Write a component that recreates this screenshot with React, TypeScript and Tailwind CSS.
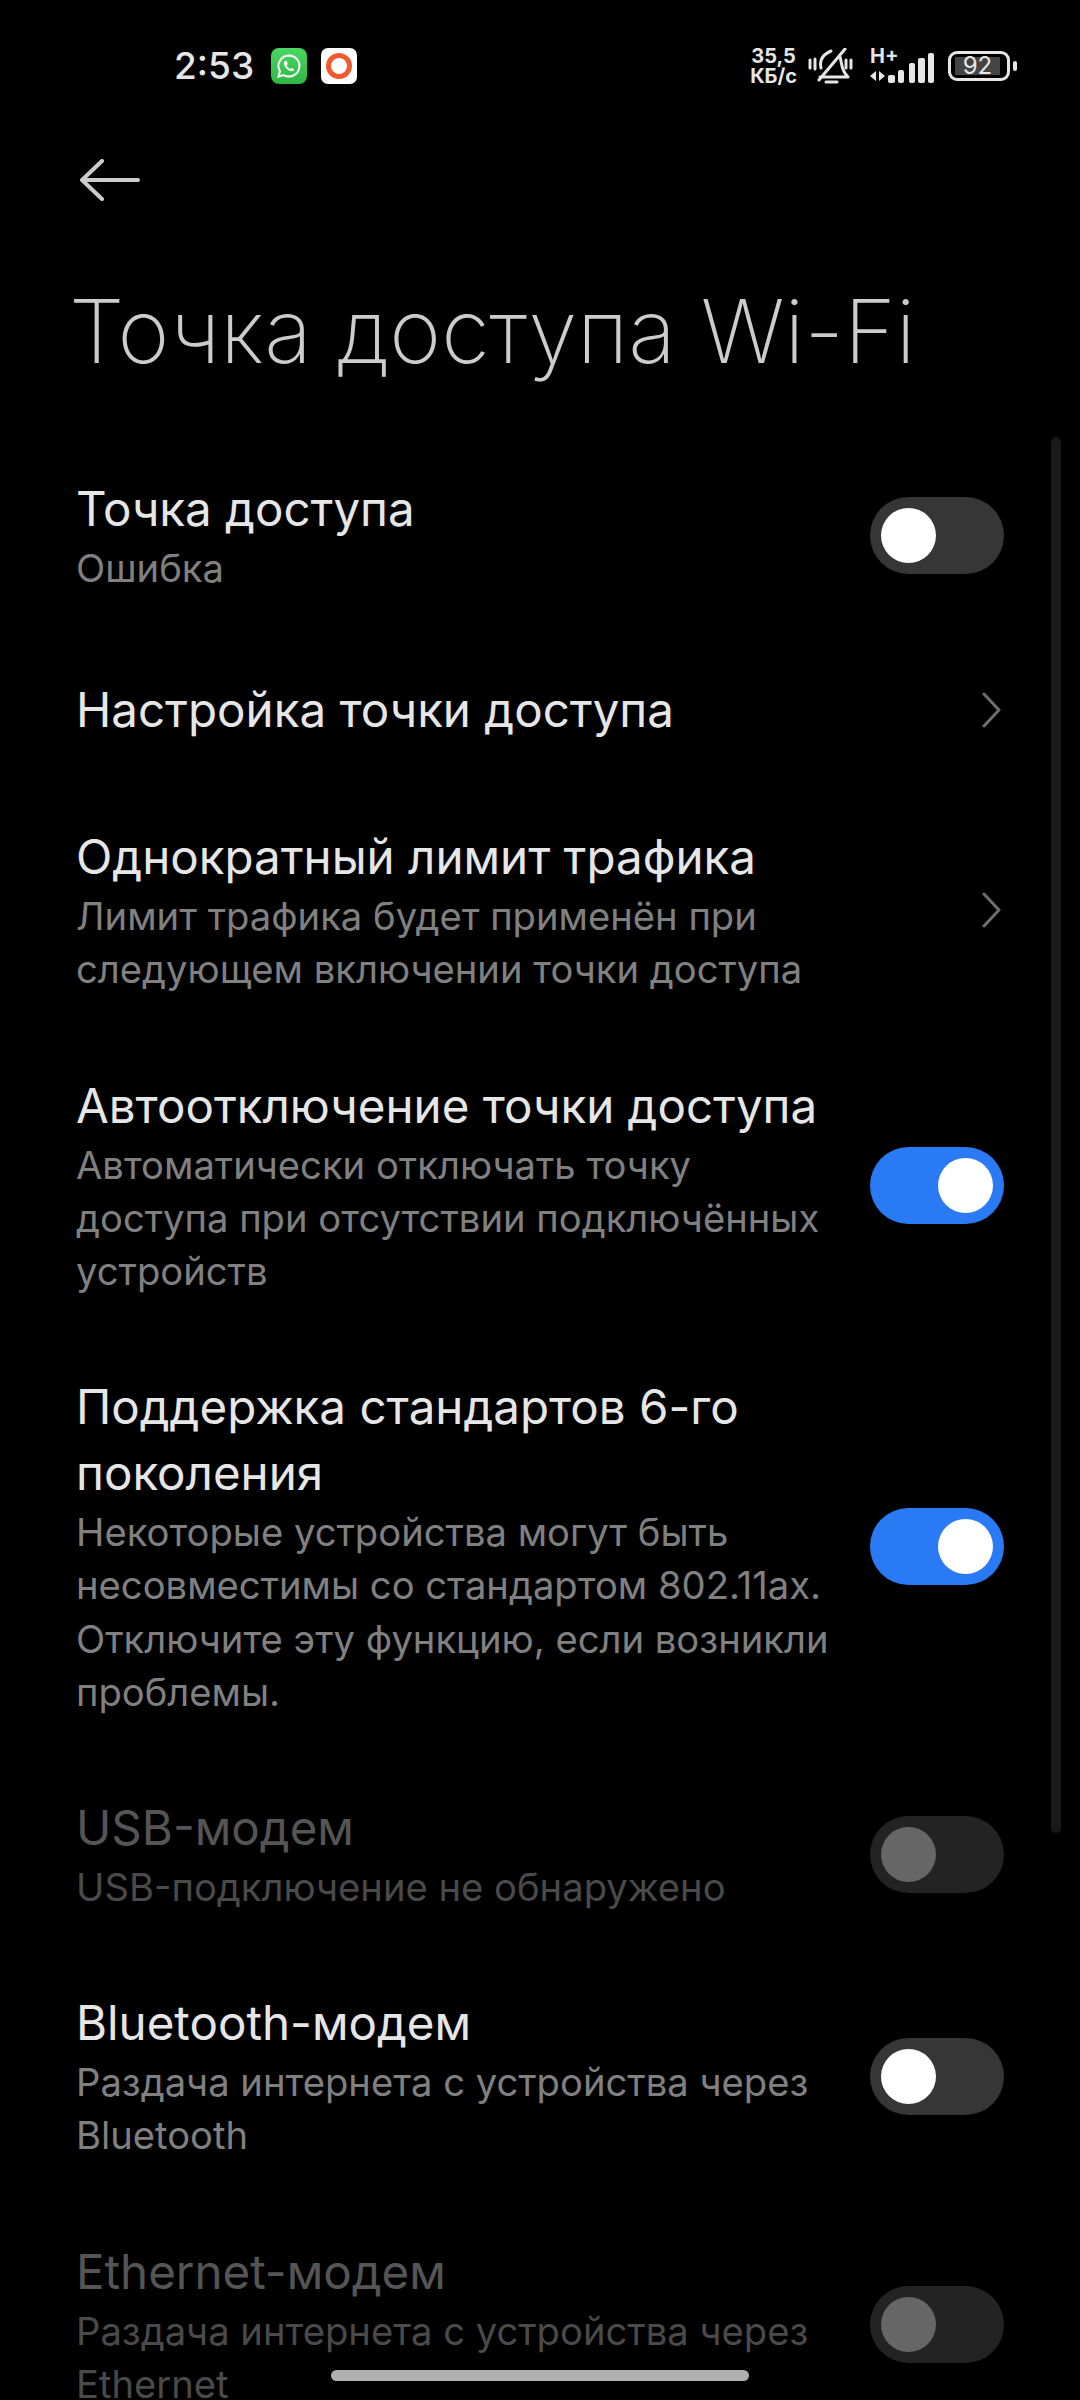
const font = "font-['Inter',sans-serif]";

type Row = {
  title: string[];
  sub?: string[];
  control: "on" | "off" | "chevron" | "disabled";
  dim?: boolean;
  tall?: boolean;
};

const rows: Row[] = [
  { title: ["Точка доступа"], sub: ["Ошибка"], control: "off" },
  { title: ["Настройка точки доступа"], control: "chevron", tall: true },
  {
    title: ["Однократный лимит трафика"],
    sub: ["Лимит трафика будет применён при", "следующем включении точки доступа"],
    control: "chevron",
  },
  {
    title: ["Автоотключение точки доступа"],
    sub: ["Автоматически отключать точку", "доступа при отсутствии подключённых", "устройств"],
    control: "on",
  },
  {
    title: ["Поддержка стандартов 6-го", "поколения"],
    sub: [
      "Некоторые устройства могут быть",
      "несовместимы со стандартом 802.11ax.",
      "Отключите эту функцию, если возникли",
      "проблемы.",
    ],
    control: "on",
  },
  { title: ["USB-модем"], sub: ["USB-подключение не обнаружено"], control: "disabled", dim: true },
  {
    title: ["Bluetooth-модем"],
    sub: ["Раздача интернета с устройства через", "Bluetooth"],
    control: "off",
  },
  {
    title: ["Ethernet-модем"],
    sub: ["Раздача интернета с устройства через", "Ethernet"],
    control: "disabled",
    dim: true,
  },
];

function Toggle({ state }: { state: "on" | "off" | "disabled" }) {
  if (state === "on") {
    return (
      <div className="flex h-[77px] w-[134px] shrink-0 items-center justify-end rounded-full bg-[#2a7af6] px-[11px]">
        <div className="size-[55px] rounded-full bg-white" />
      </div>
    );
  }
  return (
    <div
      className={`flex h-[77px] w-[134px] shrink-0 items-center rounded-full px-[11px] ${
        state === "off" ? "bg-[#363636]" : "bg-[#232323]"
      }`}
    >
      <div className={`size-[55px] rounded-full ${state === "off" ? "bg-white" : "bg-[#666666]"}`} />
    </div>
  );
}

function SettingRow({ row }: { row: Row }) {
  return (
    <div className={`flex items-center justify-between py-[38px] ${row.tall ? "min-h-[153px]" : ""}`}>
      <div className="min-w-0">
        {row.title.map((line) => (
          <div
            key={line}
            className={`whitespace-nowrap text-[47.5px] leading-[66px] ${row.dim ? "text-[#555555]" : "text-[#e6e6e6]"}`}
          >
            {line}
          </div>
        ))}
        {row.sub?.map((line) => (
          <div
            key={line}
            className={`whitespace-nowrap text-[38.2px] leading-[53.2px] ${row.dim ? "text-[#4a4a4a]" : "text-[#808080]"}`}
          >
            {line}
          </div>
        ))}
      </div>
      {row.control === "chevron" ? (
        <svg
          viewBox="0 0 19 36"
          className="mr-[3px] h-[36px] w-[19px] shrink-0"
          fill="none"
          stroke="#6e6e6e"
          strokeWidth="3"
          strokeLinecap="round"
          strokeLinejoin="round"
        >
          <path d="M2 2l15 16L2 34" />
        </svg>
      ) : (
        <Toggle state={row.control} />
      )}
    </div>
  );
}

function StatusBar() {
  return (
    <div className="flex h-[100px] items-center justify-between pl-[174px] pr-[63px] pt-[32px]">
      <div className="flex items-center">
        <span className="text-[37px] font-medium text-[#e6e6e6]">2:53</span>
        <svg viewBox="0 0 36 36" className="ml-[17px] size-[36px]">
          <defs>
            <linearGradient id="wa" x1="0" y1="0" x2="0" y2="1">
              <stop offset="0" stopColor="#49d862" />
              <stop offset="1" stopColor="#2cb742" />
            </linearGradient>
          </defs>
          <rect width="36" height="36" rx="8" fill="url(#wa)" />
          <path
            d="M18 7.5a10.5 10.5 0 0 0-9 15.9L7.5 28.5l5.2-1.4A10.5 10.5 0 1 0 18 7.5Z"
            fill="none"
            stroke="#fff"
            strokeWidth="2"
          />
          <path
            d="M14.5 12.8c-.6 0-1.6.9-1.6 2.6 0 3.2 4.4 7.8 7.8 7.8 1.7 0 2.6-1.2 2.5-2l-2.7-1.5-1.2 1.2c-1.5-.5-3.2-2.2-3.7-3.7l1.2-1.2-1.3-3.2Z"
            fill="#fff"
          />
        </svg>
        <svg viewBox="0 0 36 36" className="ml-[14px] size-[36px]">
          <rect width="36" height="36" rx="7" fill="#ffffff" />
          <circle cx="18" cy="18" r="10.5" fill="none" stroke="#f4582c" strokeWidth="5" />
        </svg>
      </div>
      <div className="flex items-center">
        <div className="text-center text-[20px] font-bold leading-[20px] text-[#e6e6e6]">
          35,5
          <br />
          КБ/с
        </div>
        <svg
          viewBox="0 0 45 36"
          className="ml-[11px] h-[36px] w-[45px]"
          fill="none"
          stroke="#e6e6e6"
          strokeWidth="3"
          strokeLinecap="round"
          strokeLinejoin="round"
        >
          <path d="M13 20c-1-3-2-12 10-17" />
          <path d="M32 9c2 6 1 14 8 20H12" />
          <path d="M37 1 11 32" />
          <path d="M18 34h11" />
          <path d="M2 12v8M7 11v10M38 12v8M43 12v8" />
        </svg>
        <div className="relative ml-[15px] h-[34px] w-[66px]">
          <span className="absolute left-[2px] top-[-3px] text-[20px] font-bold leading-[20px] text-[#e6e6e6]">H+</span>
          <svg viewBox="0 0 66 34" className="h-[34px] w-[66px]" fill="#e6e6e6">
            <path d="M8 22v10l-6-5ZM11 22l6 5-6 5Z" />
            <rect x="20" y="26" width="7" height="8" rx="2" />
            <rect x="30" y="21" width="6" height="13" rx="2" />
            <rect x="41" y="14" width="6" height="20" rx="2" />
            <rect x="50" y="9" width="7" height="25" rx="2" />
            <rect x="60" y="4" width="6" height="30" rx="2" />
          </svg>
        </div>
        <div className="ml-[14px] flex h-[30px] w-[62px] items-center rounded-[9px] border-[3px] border-[#e6e6e6] pl-[4px]">
          <div className="flex h-[18px] w-[45px] items-center justify-center bg-[#444444] text-[24px] font-normal text-[#e6e6e6]">
            92
          </div>
        </div>
        <div className="ml-[3px] h-[10px] w-[4px] rounded-full bg-[#e6e6e6]" />
      </div>
    </div>
  );
}

export default function App() {
  return (
    <div className={`relative h-[2400px] w-[1080px] overflow-hidden bg-black ${font}`}>
      <StatusBar />
      <div className="pl-[80px] pt-[59px]">
        <svg
          viewBox="0 0 60 42"
          className="h-[42px] w-[60px]"
          fill="none"
          stroke="#cccccc"
          strokeWidth="4"
          strokeLinecap="round"
          strokeLinejoin="round"
        >
          <path d="M22 2 2 21l20 19M2 21h56" />
        </svg>
      </div>
      <h1 className="mt-[75px] pl-[69px] text-[88.5px] font-extralight leading-[110px] text-[#cccccc]">
        Точка доступа Wi-Fi
      </h1>
      <div className="mt-[52px] pl-[76px] pr-[76px]">
        {rows.map((row) => (
          <SettingRow key={row.title[0]} row={row} />
        ))}
      </div>
      {/* scroll indicator */}
      <div className="absolute left-[1051px] top-[437px] h-[1396px] w-[10px] rounded-full bg-[#1a1a1a]" />
      {/* gesture bar */}
      <div className="absolute left-[331px] top-[2370px] h-[11px] w-[418px] rounded-full bg-[#b0b0b0]" />
    </div>
  );
}
